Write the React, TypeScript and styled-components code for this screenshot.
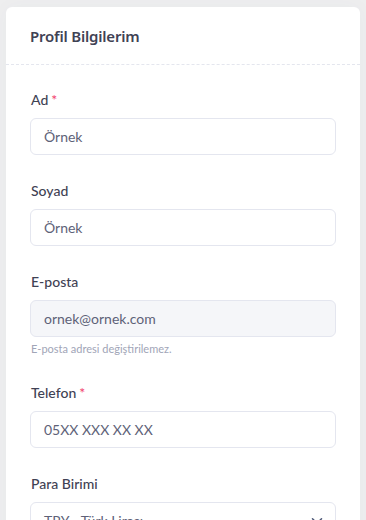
import * as React from 'react';
import styled, { createGlobalStyle } from 'styled-components';

const Global = createGlobalStyle`
    html, body {
        margin: 0;
        padding: 0;
        background: #eeeeef;
    }
    body {
        font-family: Lato, "Noto Sans", sans-serif;
    }
    * {
        box-sizing: border-box;
    }
`;

const Page = styled.div`
    padding: 7px 6px 0 6px;
    height: 520px;
    overflow: hidden;
`;

const Card = styled.div`
    background: #ffffff;
    border-radius: 6px;
    box-shadow: 0 0 20px rgba(76, 87, 125, 0.03);
`;

const CardHeader = styled.div`
    height: 58px;
    display: flex;
    align-items: center;
    padding: 0 24px;
    border-bottom: 1px dashed #e4e6ee;
`;

const Title = styled.h3`
    margin: 0;
    font-family: "Noto Sans", sans-serif;
    font-size: 15px;
    font-weight: 600;
    color: #3f4254;
    letter-spacing: -0.2px;
`;

const CardBody = styled.div`
    padding: 24px 24px 0 24px;
    display: flex;
    flex-direction: column;
    gap: 25px;
`;

const Field = styled.div`
    display: flex;
    flex-direction: column;
`;

const Label = styled.label`
    font-size: 14px;
    line-height: 21px;
    font-weight: 500;
    color: #3f4254;
    margin-bottom: 8px;
    padding-left: 1px;
`;

const Star = styled.span`
    color: #f1416c;
    margin-left: 3px;
`;

const Input = styled.div<{ $solid?: boolean }>`
    height: 37px;
    display: flex;
    align-items: center;
    justify-content: space-between;
    padding: 0 12px 0 13px;
    border: 1px solid #e4e6ef;
    border-radius: 6px;
    background: ${(p) => (p.$solid ? '#f5f6f9' : '#ffffff')};
    font-size: 14px;
    color: #5e6278;
`;

const Hint = styled.div`
    margin-top: 4px;
    font-size: 11px;
    line-height: 16px;
    color: #a1a5b7;
    padding-left: 1px;
`;

const Chevron = () => (
    <svg width="12" height="12" viewBox="0 0 16 16" fill="none">
        <path d="M2 5l6 6 6-6" stroke="#4b5675" strokeWidth="2" strokeLinecap="round" strokeLinejoin="round" />
    </svg>
);

export default function App() {
    return (
        <Page>
            <Global />
            <Card>
                <CardHeader>
                    <Title>Profil Bilgilerim</Title>
                </CardHeader>
                <CardBody>
                    <Field>
                        <Label>
                            Ad<Star>*</Star>
                        </Label>
                        <Input>Örnek</Input>
                    </Field>
                    <Field>
                        <Label>Soyad</Label>
                        <Input>Örnek</Input>
                    </Field>
                    <Field>
                        <Label>E-posta</Label>
                        <Input $solid>ornek@ornek.com</Input>
                        <Hint>E-posta adresi değiştirilemez.</Hint>
                    </Field>
                    <Field>
                        <Label>
                            Telefon<Star>*</Star>
                        </Label>
                        <Input>05XX XXX XX XX</Input>
                    </Field>
                    <Field>
                        <Label>Para Birimi</Label>
                        <Input>
                            <span>TRY - Türk Lirası</span>
                            <Chevron />
                        </Input>
                    </Field>
                </CardBody>
            </Card>
        </Page>
    );
}
